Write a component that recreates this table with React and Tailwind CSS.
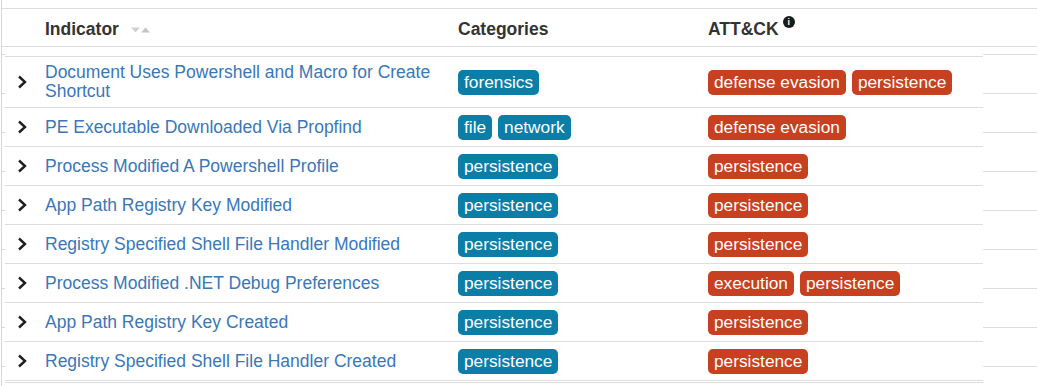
import React from "react";

const rows = [
  { name: "Document Uses Powershell and Macro for Create Shortcut", cats: ["forensics"], attack: ["defense evasion", "persistence"] },
  { name: "PE Executable Downloaded Via Propfind", cats: ["file", "network"], attack: ["defense evasion"] },
  { name: "Process Modified A Powershell Profile", cats: ["persistence"], attack: ["persistence"] },
  { name: "App Path Registry Key Modified", cats: ["persistence"], attack: ["persistence"] },
  { name: "Registry Specified Shell File Handler Modified", cats: ["persistence"], attack: ["persistence"] },
  { name: "Process Modified .NET Debug Preferences", cats: ["persistence"], attack: ["execution", "persistence"] },
  { name: "App Path Registry Key Created", cats: ["persistence"], attack: ["persistence"] },
  { name: "Registry Specified Shell File Handler Created", cats: ["persistence"], attack: ["persistence"] },
];

const Chevron = () => (
  <svg width="12" height="14" viewBox="0 0 12 14" className="ml-[11px]">
    <path d="M3 1.5 L9 7 L3 12.5" fill="none" stroke="#1e1e1e" strokeWidth="2.4" />
  </svg>
);

const SortIcon = () => (
  <svg width="20" height="6" viewBox="0 0 20 6" className="ml-3 mt-[2px]">
    <path d="M0 0.5 H9 L4.5 5.5 Z" fill="#cfcfcf" />
    <path d="M10 5.5 H19 L14.5 0.5 Z" fill="#c4c4c4" />
  </svg>
);

const InfoIcon = () => (
  <span className="ml-[4px] -mt-[14px] inline-flex h-[12px] w-[12px] items-center justify-center rounded-full bg-[#1a1a1a] text-[9px] font-bold leading-none text-white">
    i
  </span>
);

const Badge = ({ label, color }) => (
  <span className={`rounded-[5px] px-[6px] py-[2px] text-[17.3px] leading-[21px] text-white ${color}`}>{label}</span>
);

const SideStrip = ({ className }) => (
  <div className={`flex flex-col pt-[7px] ${className}`}>
    {Array.from({ length: 9 }).map((_, i) => (
      <div key={i} className="h-[39px] border-t border-[#dddddd]" />
    ))}
  </div>
);

export default function App() {
  return (
    <div className="h-[386px] w-[1037px] overflow-hidden bg-white font-['Liberation_Sans',Arial,sans-serif] text-[17.5px]">
      <div className="ml-px h-full border-l border-[#d6d6d6] pt-2">
        <div className="grid h-[39px] grid-cols-[43px_413px_250px_1fr] items-center border-y border-[#dddddd] pt-[3px] font-bold text-[#333]">
          <div />
          <div className="flex items-center">
            Indicator
            <SortIcon />
          </div>
          <div>Categories</div>
          <div className="flex items-center">
            ATT&amp;CK
            <InfoIcon />
          </div>
        </div>

        <div className="flex">
          <SideStrip className="w-[3px]" />
          <div className="mt-[9px] w-[978px] border-t border-[#dddddd]">
            {rows.map((r) => (
              <div
                key={r.name}
                className="grid min-h-[39px] grid-cols-[40px_413px_250px_1fr] items-center border-b border-[#dddddd] py-[6px]"
              >
                <Chevron />
                <a className="pr-4 leading-[19px] text-[#3a77b7]">{r.name}</a>
                <div className="flex gap-[6px]">
                  {r.cats.map((c) => (
                    <Badge key={c} label={c} color="bg-[#0b7ea8]" />
                  ))}
                </div>
                <div className="flex gap-[6px]">
                  {r.attack.map((c) => (
                    <Badge key={c} label={c} color="bg-[#c7401f]" />
                  ))}
                </div>
              </div>
            ))}
            <div className="mt-px border-t border-[#dddddd]" />
          </div>
          <SideStrip className="flex-1" />
        </div>
      </div>
    </div>
  );
}
